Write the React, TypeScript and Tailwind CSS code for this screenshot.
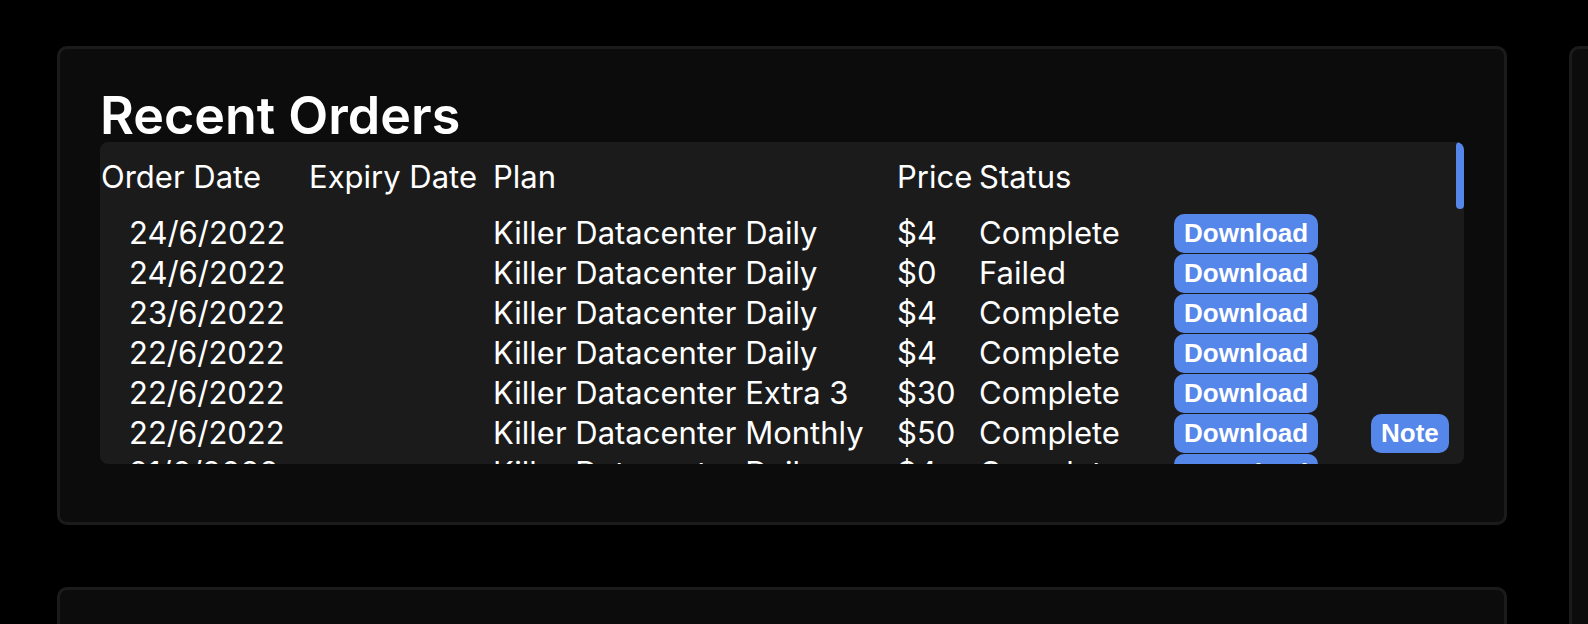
import React from 'react';

type Order = {
  date: string;
  expiry: string;
  plan: string;
  price: string;
  status: string;
  note?: boolean;
};

const orders: Order[] = [
  { date: '24/6/2022', expiry: '', plan: 'Killer Datacenter Daily', price: '$4', status: 'Complete' },
  { date: '24/6/2022', expiry: '', plan: 'Killer Datacenter Daily', price: '$0', status: 'Failed' },
  { date: '23/6/2022', expiry: '', plan: 'Killer Datacenter Daily', price: '$4', status: 'Complete' },
  { date: '22/6/2022', expiry: '', plan: 'Killer Datacenter Daily', price: '$4', status: 'Complete' },
  { date: '22/6/2022', expiry: '', plan: 'Killer Datacenter Extra 3', price: '$30', status: 'Complete' },
  { date: '22/6/2022', expiry: '', plan: 'Killer Datacenter Monthly', price: '$50', status: 'Complete', note: true },
  { date: '21/6/2022', expiry: '', plan: 'Killer Datacenter Daily', price: '$4', status: 'Complete' },
  { date: '20/6/2022', expiry: '', plan: 'Killer Datacenter Daily', price: '$4', status: 'Complete' },
  { date: '19/6/2022', expiry: '', plan: 'Killer Datacenter Daily', price: '$4', status: 'Complete' },
];

const cols = 'grid grid-cols-[209px_184px_404px_82px_195px_197px_1fr] items-center';

const Pill: React.FC<{ label: string }> = ({ label }) => (
  <button className="h-[39px] px-[10px] rounded-[10px] bg-[#5586e9] text-white font-bold text-[26px] leading-none flex items-center justify-center font-['Liberation_Sans',Arial,sans-serif]">
    {label}
  </button>
);

const App: React.FC = () => {
  return (
    <div className="h-[624px] w-full bg-black overflow-hidden flex gap-[62px] pl-[57px] pt-[46px] text-white font-['Inter','Noto_Sans',sans-serif]">
      <div className="w-[1450px] shrink-0 flex flex-col gap-[62px]">
        {/* Recent orders card */}
        <div className="bg-[#0c0c0c] border-[3px] border-[#1b1b1b] rounded-[10px] px-[40px] pt-[40px] pb-[58px]">
          <h2 className="text-[52px] leading-[53px] font-semibold">Recent Orders</h2>

          <div className="relative h-[322px] bg-[#1b1b1b] rounded-lg overflow-hidden pt-[15px] text-[31px] leading-[40px]">
            <div className={`${cols} h-[40px] mb-[16px]`}>
              <div className="pl-[1px]">Order Date</div>
              <div>Expiry Date</div>
              <div>Plan</div>
              <div>Price</div>
              <div>Status</div>
              <div />
              <div />
            </div>

            {orders.map((o, i) => (
              <div key={i} className={`${cols} h-[40px]`}>
                <div className="pl-[29px]">{o.date}</div>
                <div>{o.expiry}</div>
                <div className="whitespace-nowrap">{o.plan}</div>
                <div>{o.price}</div>
                <div>{o.status}</div>
                <div className="flex">
                  <Pill label="Download" />
                </div>
                <div className="flex">{o.note && <Pill label="Note" />}</div>
              </div>
            ))}

            {/* scrollbar thumb */}
            <div className="absolute top-0 right-0 w-[8px] h-[67px] rounded-full bg-[#5586e9]" />
          </div>
        </div>

        <div className="h-[400px] shrink-0 bg-[#0c0c0c] border-[3px] border-[#1b1b1b] rounded-[10px]" />
      </div>

      <div className="w-[400px] h-[600px] shrink-0 bg-[#0c0c0c] border-[3px] border-[#1b1b1b] rounded-[10px]" />
    </div>
  );
};

export default App;
